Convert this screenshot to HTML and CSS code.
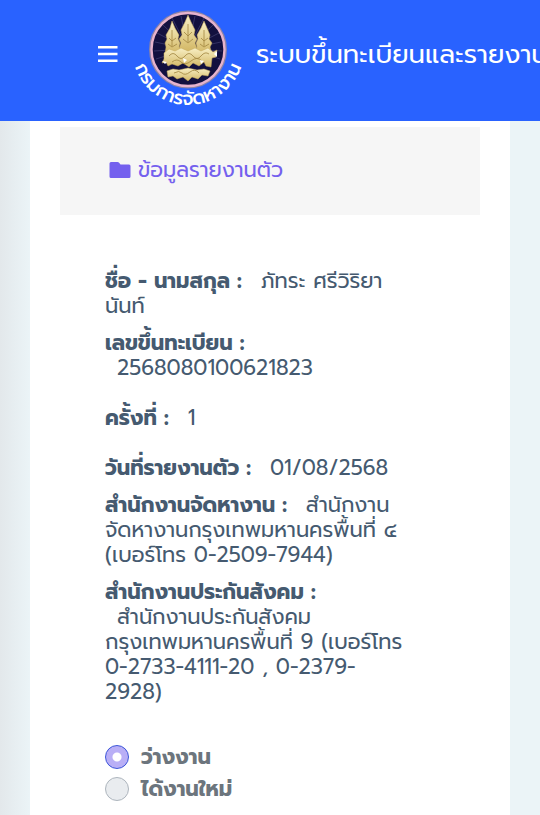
FILE: index.html
```html
<!DOCTYPE html>
<html lang="th">
<head>
    <meta charset="UTF-8">
    <meta name="viewport" content="width=device-width, initial-scale=1.0">
    <title>ข้อมูลรายงานตัว</title>
    <link rel="stylesheet" href="styles.css">
</head>
<body>

<header class="topbar">
    <button class="menu-btn" type="button" aria-label="เมนู">
        <svg width="20" height="16" viewBox="0 0 20 16"><path d="M0 1.3h19.5M0 8h19.5M0 14.7h19.5" stroke="#fff" stroke-width="2.4"/></svg>
    </button>
    <svg class="logo" width="112" height="112" viewBox="0 0 112 112" role="img">
        <defs>
            <path id="ring" d="M0 49 A56 56 0 0 0 112 49"/>
            <linearGradient id="gold" x1="0" y1="0" x2="0" y2="1">
                <stop offset="0" stop-color="#f8efc4"/>
                <stop offset="1" stop-color="#d3b866"/>
            </linearGradient>
        </defs>
        <circle cx="56" cy="49.5" r="38" fill="#12103f" stroke="#8a83a8" stroke-width="2"/>
        <circle cx="56" cy="49.5" r="36.5" fill="none" stroke="#e6b3cc" stroke-width="2.4"/>
        <g stroke="#343263" stroke-width="1">
            <path d="M56 49L25 33M56 49L23 42M56 49L22 51M56 49L24 59M56 49L31 25M56 49L40 18M56 49L49 16M56 49L63 16M56 49L72 18M56 49L81 25M56 49L87 33M56 49L89 42M56 49L90 51M56 49L88 59"/>
        </g>
        <g fill="url(#gold)" stroke="#c4a95c" stroke-width=".5">
            <path d="M56 15l3 7 4 8-1 5 3 4-2 4 3 8H46l3-8-2-4 3-4-1-5 4-8z"/>
            <path d="M40 21l3 7 4 7-1 4 2 4-1 4 3 7H33l1-7-1-4 2-4-1-4 4-7z"/>
            <path d="M72 21l3 7 3 7-1 4 3 4-2 4 2 7H63l2-7-1-4 2-4-1-4 4-7z"/>
            <path d="M32 53l5-4 6 2 6-3 7 3 7-3 6 3 7-3 5 4 4-2-1 7-4 1-1 9-5-1-2-4-5 4-6-3-4 4-6-4-5 3-6-2-4 2-2-4-4 1 2-4z"/>
            <path d="M35 71l6-2 6 1 9-2 9 2 7-1 6 2-2 5-6-1-4 4-6-2-4 4-5-4-6 2-4-3-5 1z"/>
        </g>
        <g fill="none" stroke="#a1853f" stroke-width=".8">
            <path d="M56 24v18M52 32l4 4 4-4M51 39l5 4 5-4M40 30v16M37 38l3 3 4-3M36 44l4 3 5-3M72 30v16M69 38l3 3 4-3M68 44l4 3 5-3"/>
            <path d="M37 56q4-5 8 0t8 0 8 0 8 0 8-2M40 62q5-4 9 0t10-1 11 0M42 73q5-3 8 0t8-1 9 1"/>
        </g>
        <path d="M30 61l5 1-2 2zM51 58l4 2-3 3zM68 60l4 1-3 3zM82 54l3-3v6z" fill="#fff"/>
        <text class="logo-text" text-anchor="middle"><textPath href="#ring" startOffset="50%">กรมการจัดหางาน</textPath></text>
    </svg>
    <span class="site-name">ระบบขึ้นทะเบียนและรายงานตัว</span>
</header>

<main class="page">
    <div class="card">
        <div class="section-title">
            <svg width="22" height="18" viewBox="0 0 22 18"><path d="M2 1h6.500q.8 0 1.400.6L11.500 3.500H20q1.500 0 1.500 1.500v10.500q0 1.500-1.500 1.500H2Q.5 17 .5 15.500v-13Q.5 1 2 1z" fill="#7460ee"/></svg>
            <span>ข้อมูลรายงานตัว</span>
        </div>

        <div class="details">
            <p><b>ชื่อ - นามสกุล :</b><span class="value">ภัทระ ศรีวิริยา</span><br>นันท์</p>
            <p class="spaced"><b>เลขขึ้นทะเบียน :</b><br><span class="value">2568080100621823</span></p>
            <p class="spaced"><b>ครั้งที่ :</b><span class="value">1</span></p>
            <p><b>วันที่รายงานตัว :</b><span class="value">01/08/2568</span></p>
            <p><b>สำนักงานจัดหางาน :</b><span class="value">สำนักงาน</span><br>จัดหางานกรุงเทพมหานครพื้นที่ ๔<br>(เบอร์โทร 0-2509-7944)</p>
            <p><b>สำนักงานประกันสังคม :</b><br><span class="value">สำนักงานประกันสังคม</span><br>กรุงเทพมหานครพื้นที่ 9 (เบอร์โทร<br>0-2733-4111-20 , 0-2379-<br>2928)</p>

            <div class="options">
                <label class="option"><input type="radio" name="job" checked>ว่างงาน</label>
                <label class="option"><input type="radio" name="job">ได้งานใหม่</label>
            </div>
        </div>
    </div>
</main>

</body>
</html>
```

FILE: styles.css
```css
* {
    box-sizing: border-box;
}
body {
    margin: 0;
    font-family: Prompt, "Noto Sans Thai", Inter, sans-serif;
    font-size: 21px;
    line-height: 25px;
    color: #455a70;
    background: linear-gradient(to right, #e3e8eb, #ebf4f7 30px);
    overflow-x: hidden;
}
.topbar {
    display: flex;
    align-items: flex-start;
    height: 121px;
    padding-left: 98px;
    background: #2962ff;
    overflow: hidden;
}
.menu-btn {
    display: flex;
    padding: 0;
    margin-top: 46px;
    background: none;
    border: none;
    cursor: pointer;
}
.logo {
    flex: none;
    margin-left: 14px;
    overflow: visible;
}
.logo-text {
    font-size: 19px;
    font-weight: 500;
    fill: #fff;
}
.site-name {
    margin: 35px 0 0 12px;
    font-size: 26px;
    line-height: 40px;
    color: #fff;
    white-space: nowrap;
}
.page {
    padding: 0 30px;
}
.card {
    min-height: 694px;
    padding: 6px 30px 0;
    background: #fff;
}
.section-title {
    display: flex;
    align-items: center;
    gap: 7px;
    height: 88px;
    padding: 0 0 2px 49px;
    color: #7460ee;
    background: #f6f6f6;
}
.details {
    padding: 54px 0 0 45px;
    white-space: nowrap;
}
.details p {
    margin: 0 0 12px;
}
.details .spaced {
    margin-bottom: 25px;
}
.value {
    margin-left: 12px;
}
b + .value {
    margin-left: 19px;
}
.options {
    padding-top: 24px;
}
.option {
    display: flex;
    align-items: center;
    gap: 12px;
    height: 32px;
    font-weight: bold;
    color: #6c757d;
}
.option input {
    appearance: none;
    width: 24px;
    height: 24px;
    margin: 0;
    border: 1px solid #adb5bd;
    border-radius: 50%;
    background: #e9ecef;
}
.option input:checked {
    border-color: #3b55d9;
    background: radial-gradient(circle, #fff 4px, #b9aff6 5px);
}
```
